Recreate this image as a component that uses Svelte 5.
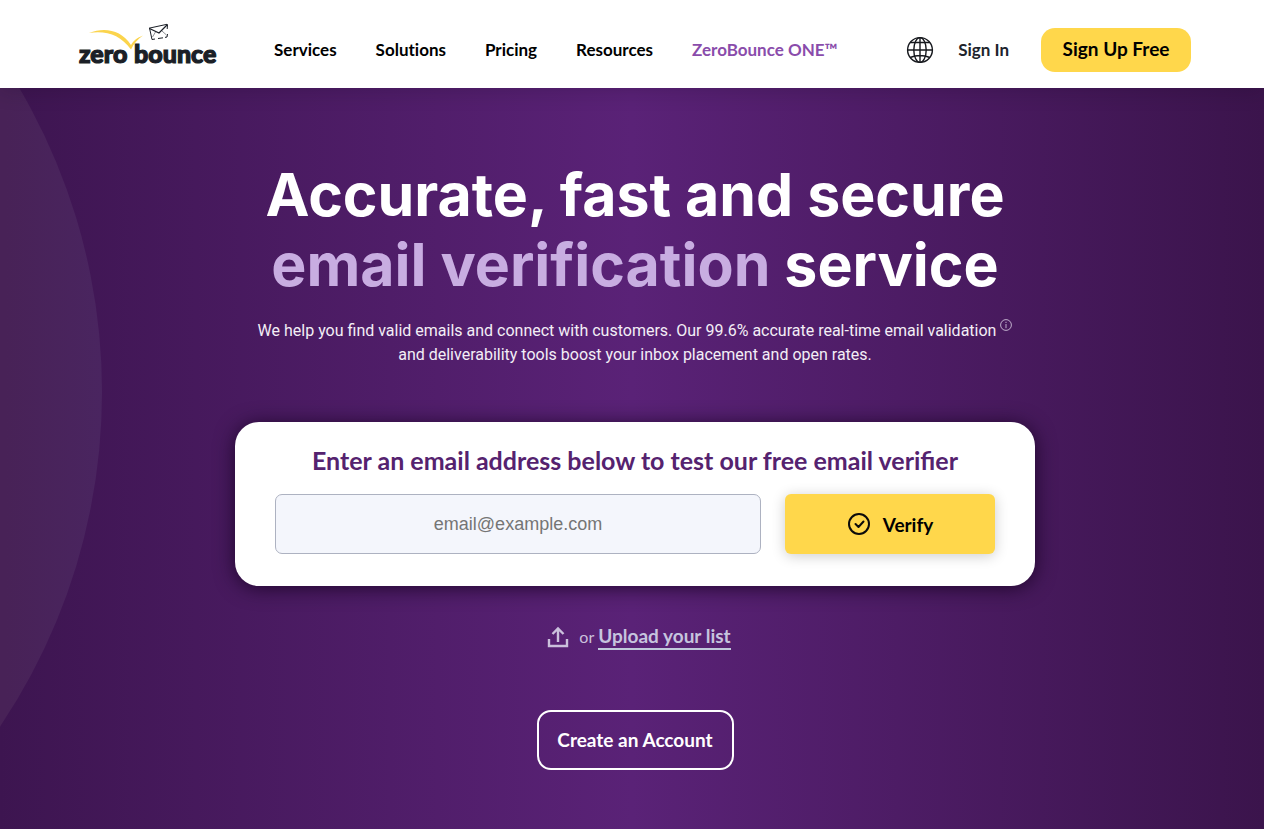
<script>
  const links = ['Services', 'Solutions', 'Pricing', 'Resources'];

  let email = '';
</script>

<div class="page">
  <header>
    <a class="logo" href="/" aria-label="zero bounce">
      <svg width="144" height="48" viewBox="0 0 144 48">
        <path d="M11 13 C27 7 43 10 53 25 C56 20 59 18 65 15.500 C60 19 56 23 53 29.500 C42 15 29 10.500 11 13Z" fill="#fbd44c" />
        <g fill="none" stroke="#1b1f27" stroke-width="1">
          <path d="M71 8.200 L89 4.300 M71.500 8 L74 19.500 L77 19 M80 18.500 L85 17.800 M89.500 14 L89 17 L87 17.400 M89.500 4.500 L89.200 9" />
          <path d="M71.500 8.500 L81 13 L89.500 4.500" stroke-width="1.300" />
          <path d="M74.500 17 L77.500 12 M84 11 L88.500 15" stroke-width="0.500" />
        </g>
        <text x="1" y="43">zero</text>
        <text x="56" y="43">bounce</text>
      </svg>
    </a>

    <nav>
      {#each links as link}
        <a href="/">{link}</a>
      {/each}
      <a class="one" href="/">ZeroBounce ONE™</a>
    </nav>

    <div class="account">
      <button class="language" aria-label="Language">
        <svg width="28" height="28" viewBox="0 0 28 28" fill="none" stroke="#16181d" stroke-width="1.400">
          <circle cx="14" cy="14" r="12.400" />
          <ellipse cx="14" cy="14" rx="6.200" ry="12.400" />
          <path d="M14 1.600 V26.400 M1.600 14 H26.400 M4 6.500 H24 M4 21.500 Q14 17.500 24 21.500" />
        </svg>
      </button>
      <a class="signin" href="/">Sign In</a>
      <a class="signup" href="/">Sign Up Free</a>
    </div>
  </header>

  <main>
    <div class="circle"></div>

    <h1>Accurate, fast and secure<br /><span>email verification</span> service</h1>

    <p class="intro">
      We help you find valid emails and connect with customers. Our 99.6% accurate real-time email validation
      <button class="info" aria-label="More information">
        <svg width="12" height="12" viewBox="0 0 12 12" fill="none" stroke="#cdbfd8" stroke-width="0.900">
          <circle cx="6" cy="6" r="5.400" />
          <path d="M6 5 V9.200 M6 2.800 V4" />
        </svg>
      </button><br />
      and deliverability tools boost your inbox placement and open rates.
    </p>

    <form on:submit|preventDefault>
      <label for="email">Enter an email address below to test our free email verifier</label>
      <div class="row">
        <input id="email" type="email" placeholder="email@example.com" bind:value={email} />
        <button class="verify" type="submit">
          <svg width="24" height="24" viewBox="0 0 24 24" fill="none" stroke="#0b0b0b" stroke-width="2">
            <circle cx="12" cy="12" r="10" />
            <path d="M8.500 12 L11.500 15 L16.500 9.500" stroke-linecap="round" stroke-linejoin="round" />
          </svg>
          <span>Verify</span>
        </button>
      </div>
    </form>

    <div class="upload">
      <svg width="22" height="22" viewBox="0 0 22 22" fill="none" stroke="#cbc0dc" stroke-width="2.400">
        <path d="M2 13 V20 H20 V13 M11 16 V3 M5.500 8 L11 2.500 L16.500 8" />
      </svg>
      <span>or</span>
      <a href="/">Upload your list</a>
    </div>

    <a class="create" href="/">Create an Account</a>
  </main>
</div>

<style>
  :global(body) {
    margin: 0;
  }

  .page {
    min-height: 100vh;
    display: flex;
    flex-direction: column;
    font-family: Lato, "Open Sans", sans-serif;
    font-size: 17px;
  }

  a {
    color: inherit;
    text-decoration: none;
  }

  button {
    padding: 0;
    border: 0;
    background: none;
    font: inherit;
    cursor: pointer;
  }

  svg {
    display: block;
    flex: none;
  }

  header {
    height: 88px;
    padding: 0 73px 0 78px;
    box-sizing: border-box;
    display: flex;
    align-items: center;
    background: #fff;
    color: #000;
    font-weight: 700;
    position: relative;
    z-index: 1;
    box-shadow: 0 2px 20px rgba(20, 0, 30, 0.2);
  }

  .logo text {
    font: 900 25px Lato, sans-serif;
    fill: #1b1f27;
    stroke: #1b1f27;
    stroke-width: 1.2px;
  }

  nav {
    display: flex;
    gap: 39px;
    margin-left: 52px;
    padding-top: 11px;
    white-space: nowrap;
    font-variant-ligatures: none;
  }

  .one {
    color: #8a4cab;
  }

  .account {
    display: flex;
    align-items: center;
    margin-left: auto;
    padding-top: 11px;
    white-space: nowrap;
  }

  .signin {
    margin: 0 32px 0 24px;
    color: #20242c;
  }

  .signup {
    width: 150px;
    line-height: 42px;
    padding-bottom: 2px;
    border-radius: 14px;
    background: #ffd74b;
    text-align: center;
    font-size: 19px;
  }

  main {
    flex: 1;
    display: flex;
    flex-direction: column;
    align-items: center;
    padding: 72px 16px 59px 22px;
    position: relative;
    overflow: hidden;
    background: linear-gradient(90deg, #3d1550, #5a2277 50%, #3b144c);
    color: #fff;
  }

  main > * {
    position: relative;
  }

  .circle {
    position: absolute;
    width: 1200px;
    height: 1200px;
    left: -1098px;
    top: -296px;
    border-radius: 50%;
    background: linear-gradient(90deg, #482257 92%, #4a2560);
  }

  h1 {
    margin: 0;
    font: 700 59px/70px Inter, "Open Sans", sans-serif;
    text-align: center;
  }

  h1 span {
    color: #c8ade1;
  }

  .intro {
    margin: 19px 0 0;
    font-family: Roboto, "Open Sans", sans-serif;
    font-size: 16px;
    line-height: 24px;
    text-align: center;
    color: #f3eef6;
  }

  .info {
    vertical-align: 5px;
  }

  form {
    width: 800px;
    max-width: 100%;
    margin-top: 55px;
    padding: 20px 40px 32px;
    box-sizing: border-box;
    border-radius: 24px;
    background: #fff;
    box-shadow: 0 2px 20px rgba(20, 0, 30, 0.8);
  }

  label {
    display: block;
    color: #55226f;
    font-size: 25px;
    font-weight: 700;
    line-height: 36px;
    text-align: center;
    white-space: nowrap;
  }

  .row {
    display: flex;
    gap: 24px;
    margin-top: 16px;
  }

  input {
    flex: 1;
    min-width: 0;
    height: 60px;
    box-sizing: border-box;
    border: 1px solid #adb2c1;
    border-radius: 7px;
    background: #f4f6fc;
    font: 18px "Liberation Sans", Arial, sans-serif;
    text-align: center;
  }

  input::placeholder {
    color: #757575;
  }

  .verify {
    display: flex;
    align-items: center;
    justify-content: center;
    gap: 12px;
    width: 210px;
    height: 60px;
    border-radius: 6px;
    background: #ffd74b;
    color: #000;
    font-size: 19px;
    font-weight: 700;
    box-shadow: 0 2px 14px rgba(0, 0, 0, 0.2);
  }

  .upload {
    display: flex;
    align-items: center;
    margin: 37px 0 0 8px;
    color: #cbc0dc;
    line-height: 25px;
  }

  .upload span {
    margin: 0 4px 0 10px;
    font-size: 16px;
  }

  .upload a {
    border-bottom: 2px solid #c0c9dc;
    color: #c6c4de;
    font-size: 19px;
    font-weight: 700;
  }

  .create {
    width: 197px;
    margin-top: 60px;
    box-sizing: border-box;
    border: 2px solid #fff;
    border-radius: 14px;
    font-size: 19px;
    font-weight: 700;
    line-height: 56px;
    text-align: center;
    white-space: nowrap;
  }
</style>
